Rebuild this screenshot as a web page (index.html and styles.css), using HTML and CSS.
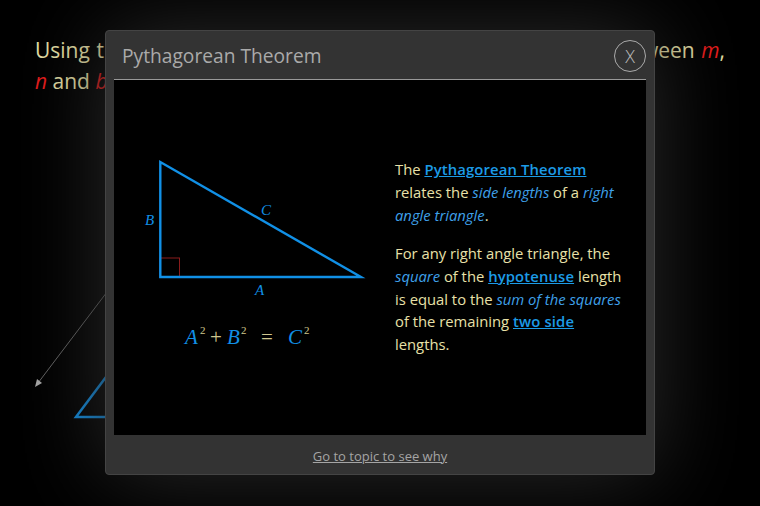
FILE: index.html
```html
<!DOCTYPE html>
<html>

<head>
    <title>Pythagorean Theorem</title>
    <link rel="stylesheet" href="styles.css">
</head>

<body>
    <div class="page">
        <p class="question"><span class="first-line">Using the triangles on the left, find the linear relationship between <i class="red">m</i>,</span> <i class="red">n</i> and <i class="red">b</i></p>
        <svg class="sketch" width="760" height="506" viewBox="0 0 760 506">
            <line x1="110" y1="288" x2="38" y2="383" stroke="#666" stroke-width="1" />
            <polygon points="35,387 37,379 42,383" fill="#aaa" />
            <polygon points="76,417 130,345 130,417" fill="none" stroke="#1190e6" stroke-width="2.5" />
        </svg>
    </div>

    <div class="modal">
        <div class="modal-header">
            <div class="modal-title">Pythagorean Theorem</div>
            <div class="close-btn">X</div>
        </div>
        <div class="modal-body">
            <svg class="diagram" width="281" height="355" viewBox="114 80 281 355">
                <rect x="160" y="258" width="19.5" height="19" fill="none" stroke="#8a1c1c" stroke-width="1" />
                <polygon points="160.3,162 160.3,277 361,277" fill="none" stroke="#1190e6" stroke-width="2.4" />
                <text class="lbl" x="145" y="225">B</text>
                <text class="lbl" x="261" y="215">C</text>
                <text class="lbl" x="255" y="295">A</text>
                <text class="eq" x="185" y="344">A</text>
                <text class="eq-tan sup" x="200" y="334">2</text>
                <text class="eq-tan plus" x="210" y="344">+</text>
                <text class="eq" x="227" y="344">B</text>
                <text class="eq-tan sup" x="241" y="334">2</text>
                <text class="eq-tan plus" x="261" y="344">=</text>
                <text class="eq" x="288" y="344">C</text>
                <text class="eq-tan sup" x="304" y="334">2</text>
            </svg>
            <div class="explain">
                <p>The <a class="term" href="#">Pythagorean Theorem</a> relates the <i>side lengths</i> of a <i>right angle triangle</i>.</p>
                <p>For any right angle triangle, the <i>square</i> of the <a class="term" href="#">hypotenuse</a> length is equal to the <i>sum of the squares</i> of the remaining <a class="term" href="#">two side</a> lengths.</p>
            </div>
        </div>
        <div class="modal-footer"><a href="#">Go to topic to see why</a></div>
    </div>
</body>

</html>
```

FILE: styles.css
```css
body {
    margin: 0;
    background: #000;
    font-family: "Open Sans", sans-serif;
    overflow: hidden;
}

/* Page behind the popup */
.page {
    position: relative;
    width: 760px;
    height: 506px;
    padding: 35px 35px 0;
    box-sizing: border-box;
}

.question {
    margin: 0;
    color: #e8e0a8;
    font-size: 21px;
    line-height: 31px;
}

.first-line {
    display: block;
    text-align: justify;
    text-align-last: justify;
}

.red {
    color: #e81c1c;
}

.sketch {
    position: absolute;
    left: 0;
    top: 0;
}

/* Popup */
.modal {
    position: absolute;
    left: 105px;
    top: 30px;
    width: 550px;
    height: 445px;
    box-sizing: border-box;
    display: flex;
    flex-direction: column;
    background: #333;
    border: 1px solid #444;
    border-radius: 4px;
    box-shadow: 0 0 90px #2a2a2a;
}

.modal-header {
    height: 48px;
    flex: none;
    margin: 0 8px;
    display: flex;
    justify-content: space-between;
    align-items: center;
    border-bottom: 1px solid #999;
}

.modal-title {
    padding-left: 8px;
    color: #aaa;
    font-size: 19.2px;
}

.close-btn {
    width: 30px;
    height: 30px;
    margin-top: 1px;
    border: 1px solid #aaa;
    border-radius: 50%;
    color: #bbb;
    font-size: 18px;
    font-weight: 300;
    line-height: 30px;
    text-align: center;
}

.modal-body {
    height: 355px;
    flex: none;
    margin: 0 8px;
    display: flex;
    align-items: center;
    background: #000;
}

.diagram {
    flex: none;
}

.lbl {
    font-family: "Liberation Serif", serif;
    font-style: italic;
    font-size: 15px;
    fill: #1190e6;
}

.eq {
    font-family: "Liberation Serif", serif;
    font-style: italic;
    font-size: 21px;
    fill: #1190e6;
}

.eq-tan {
    font-family: "Liberation Serif", serif;
    fill: #cfc68e;
}

.sup {
    font-size: 11px;
}

.plus {
    font-size: 21px;
}

.explain {
    width: 232px;
    padding-bottom: 1px;
    color: #e8e0a8;
    font-size: 14.8px;
    line-height: 22.7px;
}

.explain p {
    margin: 0 0 16px;
}

.explain p:last-child {
    margin-bottom: 0;
}

.explain i {
    color: #3fa0ea;
}

.term {
    color: #1c9be6;
    font-weight: 650;
    letter-spacing: 0.15px;
}

.modal-footer {
    flex: 1;
    display: flex;
    justify-content: center;
    align-items: center;
    padding-top: 2px;
    font-size: 13px;
}

.modal-footer a {
    color: #a5a5a5;
}
```
